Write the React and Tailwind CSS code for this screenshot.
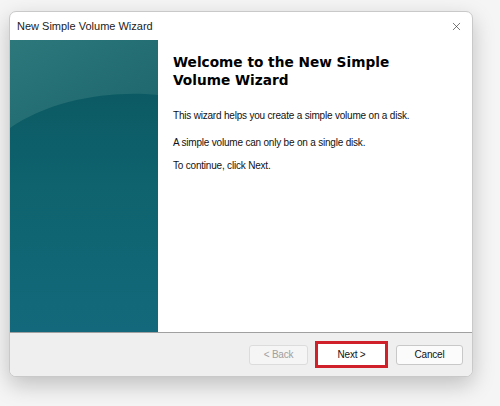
import { X } from 'lucide-react';

const WizardArt = () => (
    <svg width="148" height="293" viewBox="0 0 148 293" className="block">
        <defs>
            <linearGradient id="topGlow" x1="0" y1="0" x2="1" y2="1">
                <stop offset="0" stopColor="#2c787b" />
                <stop offset="1" stopColor="#1c656c" />
            </linearGradient>
            <linearGradient id="bottomFill" x1="0" y1="0" x2="0" y2="1">
                <stop offset="0" stopColor="#0a555d" />
                <stop offset="0.5" stopColor="#0e636e" />
                <stop offset="1" stopColor="#13697b" />
            </linearGradient>
        </defs>
        <rect width="148" height="293" fill="url(#bottomFill)" />
        <path d="M0 0 H148 V55 C100 50 40 60 0 88 Z" fill="url(#topGlow)" />
    </svg>
);

export default function App() {
    return (
        <div className="w-[500px] h-[406px] bg-[#f5f5f5] pl-[9px] pt-[11px] font-['Liberation_Sans',sans-serif]">
            <div className="w-[464px] h-[366px] bg-white rounded-[7px] border border-[#c9c9c9] shadow-[0_8px_22px_rgba(0,0,0,0.22)] flex flex-col overflow-hidden">
                {/* Title bar */}
                <div className="h-[28px] flex items-center justify-between pl-[7px] pr-[9px] shrink-0">
                    <span className="text-[11px] text-[#1b1b1b]">New Simple Volume Wizard</span>
                    <X size={13} strokeWidth={1.2} className="text-[#333]" />
                </div>

                {/* Body */}
                <div className="flex flex-1 min-h-0">
                    <div className="w-[148px] shrink-0">
                        <WizardArt />
                    </div>
                    <div className="flex-1 pl-[15px] pt-[13px] pr-3">
                        <h1 className="font-['DejaVu_Sans',sans-serif] font-bold text-[13.7px] leading-[18px] text-black">
                            Welcome to the New Simple<br />Volume Wizard
                        </h1>
                        <p className="mt-[19px] text-[10px] leading-[15px] tracking-[-0.2px] text-[#111]">This wizard helps you create a simple volume on a disk.</p>
                        <p className="mt-[12px] text-[10px] leading-[15px] tracking-[-0.2px] text-[#111]">A simple volume can only be on a single disk.</p>
                        <p className="mt-[8px] text-[10px] leading-[15px] tracking-[-0.2px] text-[#111]">To continue, click Next.</p>
                    </div>
                </div>

                {/* Footer */}
                <div className="h-[44px] shrink-0 bg-[#efefef] border-t border-[#a0a0a0] flex items-center justify-end pr-[9px]">
                    <button className="w-[59px] h-[20px] border border-[#dcdcdc] rounded-[3px] bg-[#f5f5f5] text-[10px] tracking-[-0.2px] text-[#a0a0a0]">
                        &lt; Back
                    </button>
                    <div className="ml-[7px] border-[3px] border-[#d0202a] p-[1px] bg-white">
                        <div className="w-[65px] h-[19px] flex items-center justify-center text-[10px] tracking-[-0.2px] text-[#111]">Next &gt;</div>
                    </div>
                    <button className="ml-[8px] w-[67px] h-[20px] border border-[#c8c8c8] rounded-[3px] bg-[#fbfbfb] text-[10px] tracking-[-0.2px] text-[#111]">
                        Cancel
                    </button>
                </div>
            </div>
        </div>
    );
}
